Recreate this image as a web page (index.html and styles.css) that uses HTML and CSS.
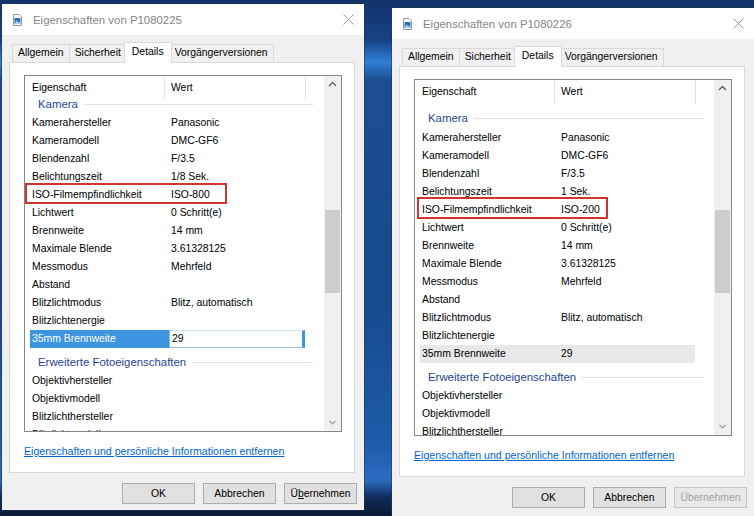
FILE: index.html
```html
<!DOCTYPE html>
<html lang="de">
<head>
<meta charset="utf-8">
<title>Eigenschaften</title>
<link rel="stylesheet" href="styles.css">
</head>
<body>
<div class="desktop">

  <div class="window win-a">
    <div class="titlebar">
      <svg class="title-icon" width="9" height="12" viewBox="0 0 9 12"><path d="M0.5 0.5h5.5l2.5 2.5v8.5h-8z" fill="#fff" stroke="#8c9aa8"/><rect x="1.5" y="4" width="6" height="6" fill="#2f6fb5"/><path d="M1.5 10L3.7 6.6L5.4 8.4L6.3 7.5L7.5 10z" fill="#a9d0f2"/></svg>
      <span class="title">Eigenschaften von P1080225</span>
      <svg class="close" width="11" height="11" viewBox="0 0 11 11"><path d="M0.5 0.5L10.5 10.5M10.5 0.5L0.5 10.5" stroke="#9a9a9a" stroke-width="1"/></svg>
    </div>
    <div class="tabs">
      <div class="tab">Allgemein</div>
      <div class="tab">Sicherheit</div>
      <div class="tab active">Details</div>
      <div class="tab">Vorgängerversionen</div>
    </div>
    <div class="panel">
      <div class="listview">
        <div class="lv-main">
          <div class="lv-head">
            <div class="hc hc1">Eigenschaft</div>
            <div class="hc hc2">Wert</div>
          </div>
          <div class="lv-body">
            <div class="lv-content scrolled">
              <div class="group">Kamera</div>
              <div class="row"><span>Kamerahersteller</span><span>Panasonic</span></div>
              <div class="row"><span>Kameramodell</span><span>DMC-GF6</span></div>
              <div class="row"><span>Blendenzahl</span><span>F/3.5</span></div>
              <div class="row"><span>Belichtungszeit</span><span>1/8 Sek.</span></div>
              <div class="row"><span>ISO-Filmempfindlichkeit</span><span>ISO-800</span><i class="mark mark-a"></i></div>
              <div class="row"><span>Lichtwert</span><span>0 Schritt(e)</span></div>
              <div class="row"><span>Brennweite</span><span>14 mm</span></div>
              <div class="row"><span>Maximale Blende</span><span>3.61328125</span></div>
              <div class="row"><span>Messmodus</span><span>Mehrfeld</span></div>
              <div class="row"><span>Abstand</span><span></span></div>
              <div class="row"><span>Blitzlichtmodus</span><span>Blitz, automatisch</span></div>
              <div class="row"><span>Blitzlichtenergie</span><span></span></div>
              <div class="row sel"><span>35mm Brennweite</span><span class="edit">29</span></div>
              <div class="group">Erweiterte Fotoeigenschaften</div>
              <div class="row"><span>Objektivhersteller</span><span></span></div>
              <div class="row"><span>Objektivmodell</span><span></span></div>
              <div class="row"><span>Blitzlichthersteller</span><span></span></div>
              <div class="row"><span>Blitzlichtmodell</span><span></span></div>
            </div>
          </div>
        </div>
        <div class="scrollbar">
          <svg class="arrow" width="17" height="17" viewBox="0 0 17 17"><path d="M5 10L8.5 6.5L12 10" fill="none" stroke="#606060" stroke-width="1.4"/></svg>
          <svg class="arrow" width="17" height="17" viewBox="0 0 17 17"><path d="M5.5 7L8.5 10L11.5 7" fill="none" stroke="#a0a0a0" stroke-width="1.2"/></svg>
          <div class="thumb thumb-a"></div>
        </div>
      </div>
      <div class="link-row"><a class="link" href="#">Eigenschaften und persönliche Informationen entfernen</a></div>
    </div>
    <div class="buttons">
      <div class="btn">OK</div>
      <div class="btn">Abbrechen</div>
      <div class="btn">Ü<u>b</u>ernehmen</div>
    </div>
  </div>

  <div class="window win-b">
    <div class="titlebar">
      <svg class="title-icon" width="9" height="12" viewBox="0 0 9 12"><path d="M0.5 0.5h5.5l2.5 2.5v8.5h-8z" fill="#fff" stroke="#8c9aa8"/><rect x="1.5" y="4" width="6" height="6" fill="#2f6fb5"/><path d="M1.5 10L3.7 6.6L5.4 8.4L6.3 7.5L7.5 10z" fill="#a9d0f2"/></svg>
      <span class="title">Eigenschaften von P1080226</span>
      <svg class="close" width="11" height="11" viewBox="0 0 11 11"><path d="M0.5 0.5L10.5 10.5M10.5 0.5L0.5 10.5" stroke="#9a9a9a" stroke-width="1"/></svg>
    </div>
    <div class="tabs">
      <div class="tab">Allgemein</div>
      <div class="tab">Sicherheit</div>
      <div class="tab active">Details</div>
      <div class="tab">Vorgängerversionen</div>
    </div>
    <div class="panel">
      <div class="listview">
        <div class="lv-main">
          <div class="lv-head">
            <div class="hc hc1">Eigenschaft</div>
            <div class="hc hc2">Wert</div>
          </div>
          <div class="lv-body">
            <div class="lv-content">
              <div class="group first">Kamera</div>
              <div class="row"><span>Kamerahersteller</span><span>Panasonic</span></div>
              <div class="row"><span>Kameramodell</span><span>DMC-GF6</span></div>
              <div class="row"><span>Blendenzahl</span><span>F/3.5</span></div>
              <div class="row"><span>Belichtungszeit</span><span>1 Sek.</span></div>
              <div class="row"><span>ISO-Filmempfindlichkeit</span><span>ISO-200</span><i class="mark mark-b"></i></div>
              <div class="row"><span>Lichtwert</span><span>0 Schritt(e)</span></div>
              <div class="row"><span>Brennweite</span><span>14 mm</span></div>
              <div class="row"><span>Maximale Blende</span><span>3.61328125</span></div>
              <div class="row"><span>Messmodus</span><span>Mehrfeld</span></div>
              <div class="row"><span>Abstand</span><span></span></div>
              <div class="row"><span>Blitzlichtmodus</span><span>Blitz, automatisch</span></div>
              <div class="row"><span>Blitzlichtenergie</span><span></span></div>
              <div class="row hl"><span>35mm Brennweite</span><span>29</span></div>
              <div class="group">Erweiterte Fotoeigenschaften</div>
              <div class="row"><span>Objektivhersteller</span><span></span></div>
              <div class="row"><span>Objektivmodell</span><span></span></div>
              <div class="row"><span>Blitzlichthersteller</span><span></span></div>
            </div>
          </div>
        </div>
        <div class="scrollbar">
          <svg class="arrow" width="17" height="17" viewBox="0 0 17 17"><path d="M5 10L8.5 6.5L12 10" fill="none" stroke="#606060" stroke-width="1.4"/></svg>
          <svg class="arrow" width="17" height="17" viewBox="0 0 17 17"><path d="M5.5 7L8.5 10L11.5 7" fill="none" stroke="#a0a0a0" stroke-width="1.2"/></svg>
          <div class="thumb thumb-b"></div>
        </div>
      </div>
      <div class="link-row"><a class="link" href="#">Eigenschaften und persönliche Informationen entfernen</a></div>
    </div>
    <div class="buttons">
      <div class="btn">OK</div>
      <div class="btn">Abbrechen</div>
      <div class="btn disabled">Übernehmen</div>
    </div>
  </div>

</div>
</body>
</html>
```
FILE: styles.css
```css
html, body {
  margin: 0;
  padding: 0;
}
body {
  width: 754px;
  height: 516px;
  overflow: hidden;
  font-family: "Liberation Sans", Arial, sans-serif;
  font-size: 10.4px;
  color: #000;
  background: linear-gradient(180deg, #12336a 0px, #174285 40px, #2f7fd6 62px, #1c4d92 80px, #184a8e 300px, #1d5aa8 440px, #2c6cbf 480px, #0f2a58 498px, #091a36 516px);
}
.desktop {
  position: relative;
  width: 754px;
  height: 516px;
}
.window {
  position: absolute;
  width: 362px;
  background: #f0f0f0;
  box-shadow: 0 0 0 1px rgba(40, 50, 70, 0.55);
  display: flex;
  flex-direction: column;
}
.win-a {
  left: 2px;
  top: 4px;
  height: 506px;
}
.win-b {
  left: 392px;
  top: 8px;
  height: 510px;
}
.titlebar {
  height: 31px;
  background: #fff;
  display: flex;
  align-items: center;
  padding: 0 10px 0 11px;
  flex-shrink: 0;
}
.title-icon {
  margin-right: 11px;
  flex-shrink: 0;
}
.title {
  flex: 1;
  font-size: 11.4px;
  color: #858585;
}
.close {
  flex-shrink: 0;
}
.tabs {
  display: flex;
  align-items: flex-end;
  height: 20px;
  margin: 7px 0 0 10px;
  position: relative;
  z-index: 2;
}
.tab {
  height: 18px;
  box-sizing: border-box;
  padding: 0 5px;
  border: 1px solid #d9d9d9;
  border-bottom: none;
  margin-left: -1px;
  line-height: 16px;
  background: #f0f0f0;
  white-space: nowrap;
}
.tab:first-child {
  margin-left: 0;
}
.tab.active {
  height: 21px;
  margin: 0 -2px -1px -3px;
  padding: 0 7px;
  background: #fff;
  line-height: 17px;
  position: relative;
  z-index: 1;
}
.panel {
  margin: 0 9px 0 7px;
  height: 411px;
  box-sizing: border-box;
  background: #fff;
  border: 1px solid #d9d9d9;
  padding: 12px 12px 0 14px;
}
.listview {
  width: 318px;
  height: 357px;
  box-sizing: border-box;
  border: 1px solid #828790;
  display: flex;
}
.lv-main {
  width: 299px;
  display: flex;
  flex-direction: column;
  overflow: hidden;
}
.lv-head {
  height: 24px;
  display: flex;
  flex-shrink: 0;
  background: #fff;
  position: relative;
  z-index: 1;
}
.hc {
  box-sizing: border-box;
  border-right: 1px solid #e5e5e5;
  line-height: 24px;
  white-space: nowrap;
}
.hc1 {
  width: 140px;
  padding-left: 7px;
}
.hc2 {
  width: 141px;
  padding-left: 6px;
}
.lv-body {
  flex: 1;
  overflow: hidden;
}
.lv-content.scrolled {
  margin-top: -10px;
}
.group {
  display: flex;
  align-items: center;
  height: 24px;
  box-sizing: border-box;
  padding: 4px 11px 0 13px;
  color: #1e4692;
  font-size: 11.4px;
  white-space: nowrap;
}
.group.first {
  height: 25px;
  padding-top: 3px;
}
.group::after {
  content: "";
  flex: 1;
  height: 1px;
  background: #dbe2ec;
  margin-left: 6px;
}
.row {
  position: relative;
  display: grid;
  grid-template-columns: 139px 136px;
  padding-left: 5px;
  height: 18px;
  line-height: 18px;
}
.row > span {
  padding-left: 2px;
  white-space: nowrap;
  overflow: hidden;
}
.row.sel > span:first-child {
  background: #3d95e0;
  color: #fff;
}
.row.sel .edit {
  box-sizing: border-box;
  background: #fff;
  border: 1px solid #8fbbe8;
  border-top-color: #c9dff5;
  border-right: 3px solid #3d95e0;
  line-height: 16px;
  padding-left: 2px;
}
.row.hl > span {
  background: #e8e8e8;
}
.mark {
  position: absolute;
  box-sizing: border-box;
  border: 2px solid #d0342c;
  pointer-events: none;
}
.mark-a {
  left: 0;
  top: -3px;
  width: 202px;
  height: 21px;
}
.mark-b {
  left: 2px;
  top: -4px;
  width: 191px;
  height: 22px;
}
.scrollbar {
  width: 17px;
  background: #f0f0f0;
  position: relative;
  display: flex;
  flex-direction: column;
  justify-content: space-between;
}
.arrow {
  display: block;
}
.thumb {
  position: absolute;
  left: 1px;
  width: 15px;
  height: 83px;
  background: #cdcdcd;
}
.thumb-a {
  top: 134px;
}
.thumb-b {
  top: 130px;
}
.link-row {
  margin-top: 11px;
  height: 16px;
  line-height: 16px;
  font-size: 10.6px;
  white-space: nowrap;
}
.link {
  color: #0066cc;
  text-decoration: underline;
}
.buttons {
  display: flex;
  justify-content: flex-end;
  gap: 8px;
  margin: 10px 7px 0 0;
}
.btn {
  width: 73px;
  height: 21px;
  box-sizing: border-box;
  border: 1px solid #adadad;
  background: #e1e1e1;
  text-align: center;
  line-height: 19px;
}
.btn.disabled {
  color: #a3a3a3;
  border-color: #c6c6c6;
  background: #e8e8e8;
}
```
